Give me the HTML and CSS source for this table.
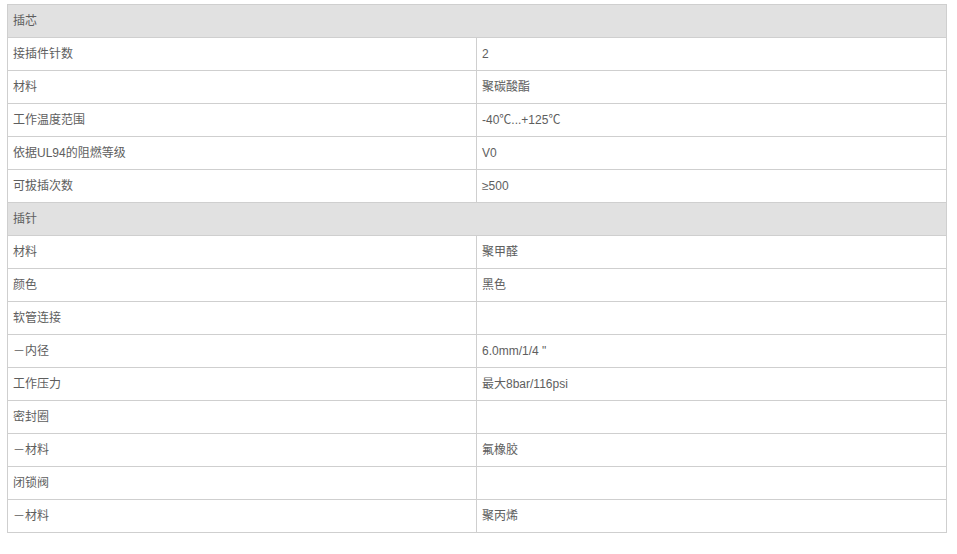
FILE: index.html
```html
<!DOCTYPE html>
<html lang="zh">
<head>
<meta charset="utf-8">
<link rel="stylesheet" href="styles.css">
</head>
<body>
<div class="wrap">
<table class="spec">
<colgroup><col class="c1"><col class="c2"></colgroup>
<tr class="sec"><td colspan="2">插芯</td></tr>
<tr><td>接插件针数</td><td>2</td></tr>
<tr><td>材料</td><td>聚碳酸酯</td></tr>
<tr><td>工作温度范围</td><td>-40℃...+125℃</td></tr>
<tr><td>依据UL94的阻燃等级</td><td>V0</td></tr>
<tr><td>可拔插次数</td><td>≥500</td></tr>
<tr class="sec"><td colspan="2">插针</td></tr>
<tr><td>材料</td><td>聚甲醛</td></tr>
<tr><td>颜色</td><td>黑色</td></tr>
<tr><td>软管连接</td><td></td></tr>
<tr><td>－内径</td><td>6.0mm/1/4 "</td></tr>
<tr><td>工作压力</td><td>最大8bar/116psi</td></tr>
<tr><td>密封圈</td><td></td></tr>
<tr><td>－材料</td><td>氟橡胶</td></tr>
<tr><td>闭锁阀</td><td></td></tr>
<tr><td>－材料</td><td>聚丙烯</td></tr>
</table>
</div>
</body>
</html>
```
FILE: styles.css
```css
html, body {
  margin: 0;
  padding: 0;
  background: #fff;
}
.wrap {
  padding: 4px 0 0 7px;
}
.spec {
  border-collapse: collapse;
  width: 940px;
  table-layout: fixed;
  font-family: "Liberation Sans", Arial, "Noto Sans CJK SC", sans-serif;
  font-size: 12px;
  color: #5e5e5e;
}
.c1 { width: 469px; }
.spec td {
  border: 1px solid #cfcfcf;
  height: 33px;
  padding: 0 5px;
  box-sizing: border-box;
  vertical-align: middle;
  line-height: 16px;
}
.spec tr.sec td {
  background: #e1e1e1;
}
```
